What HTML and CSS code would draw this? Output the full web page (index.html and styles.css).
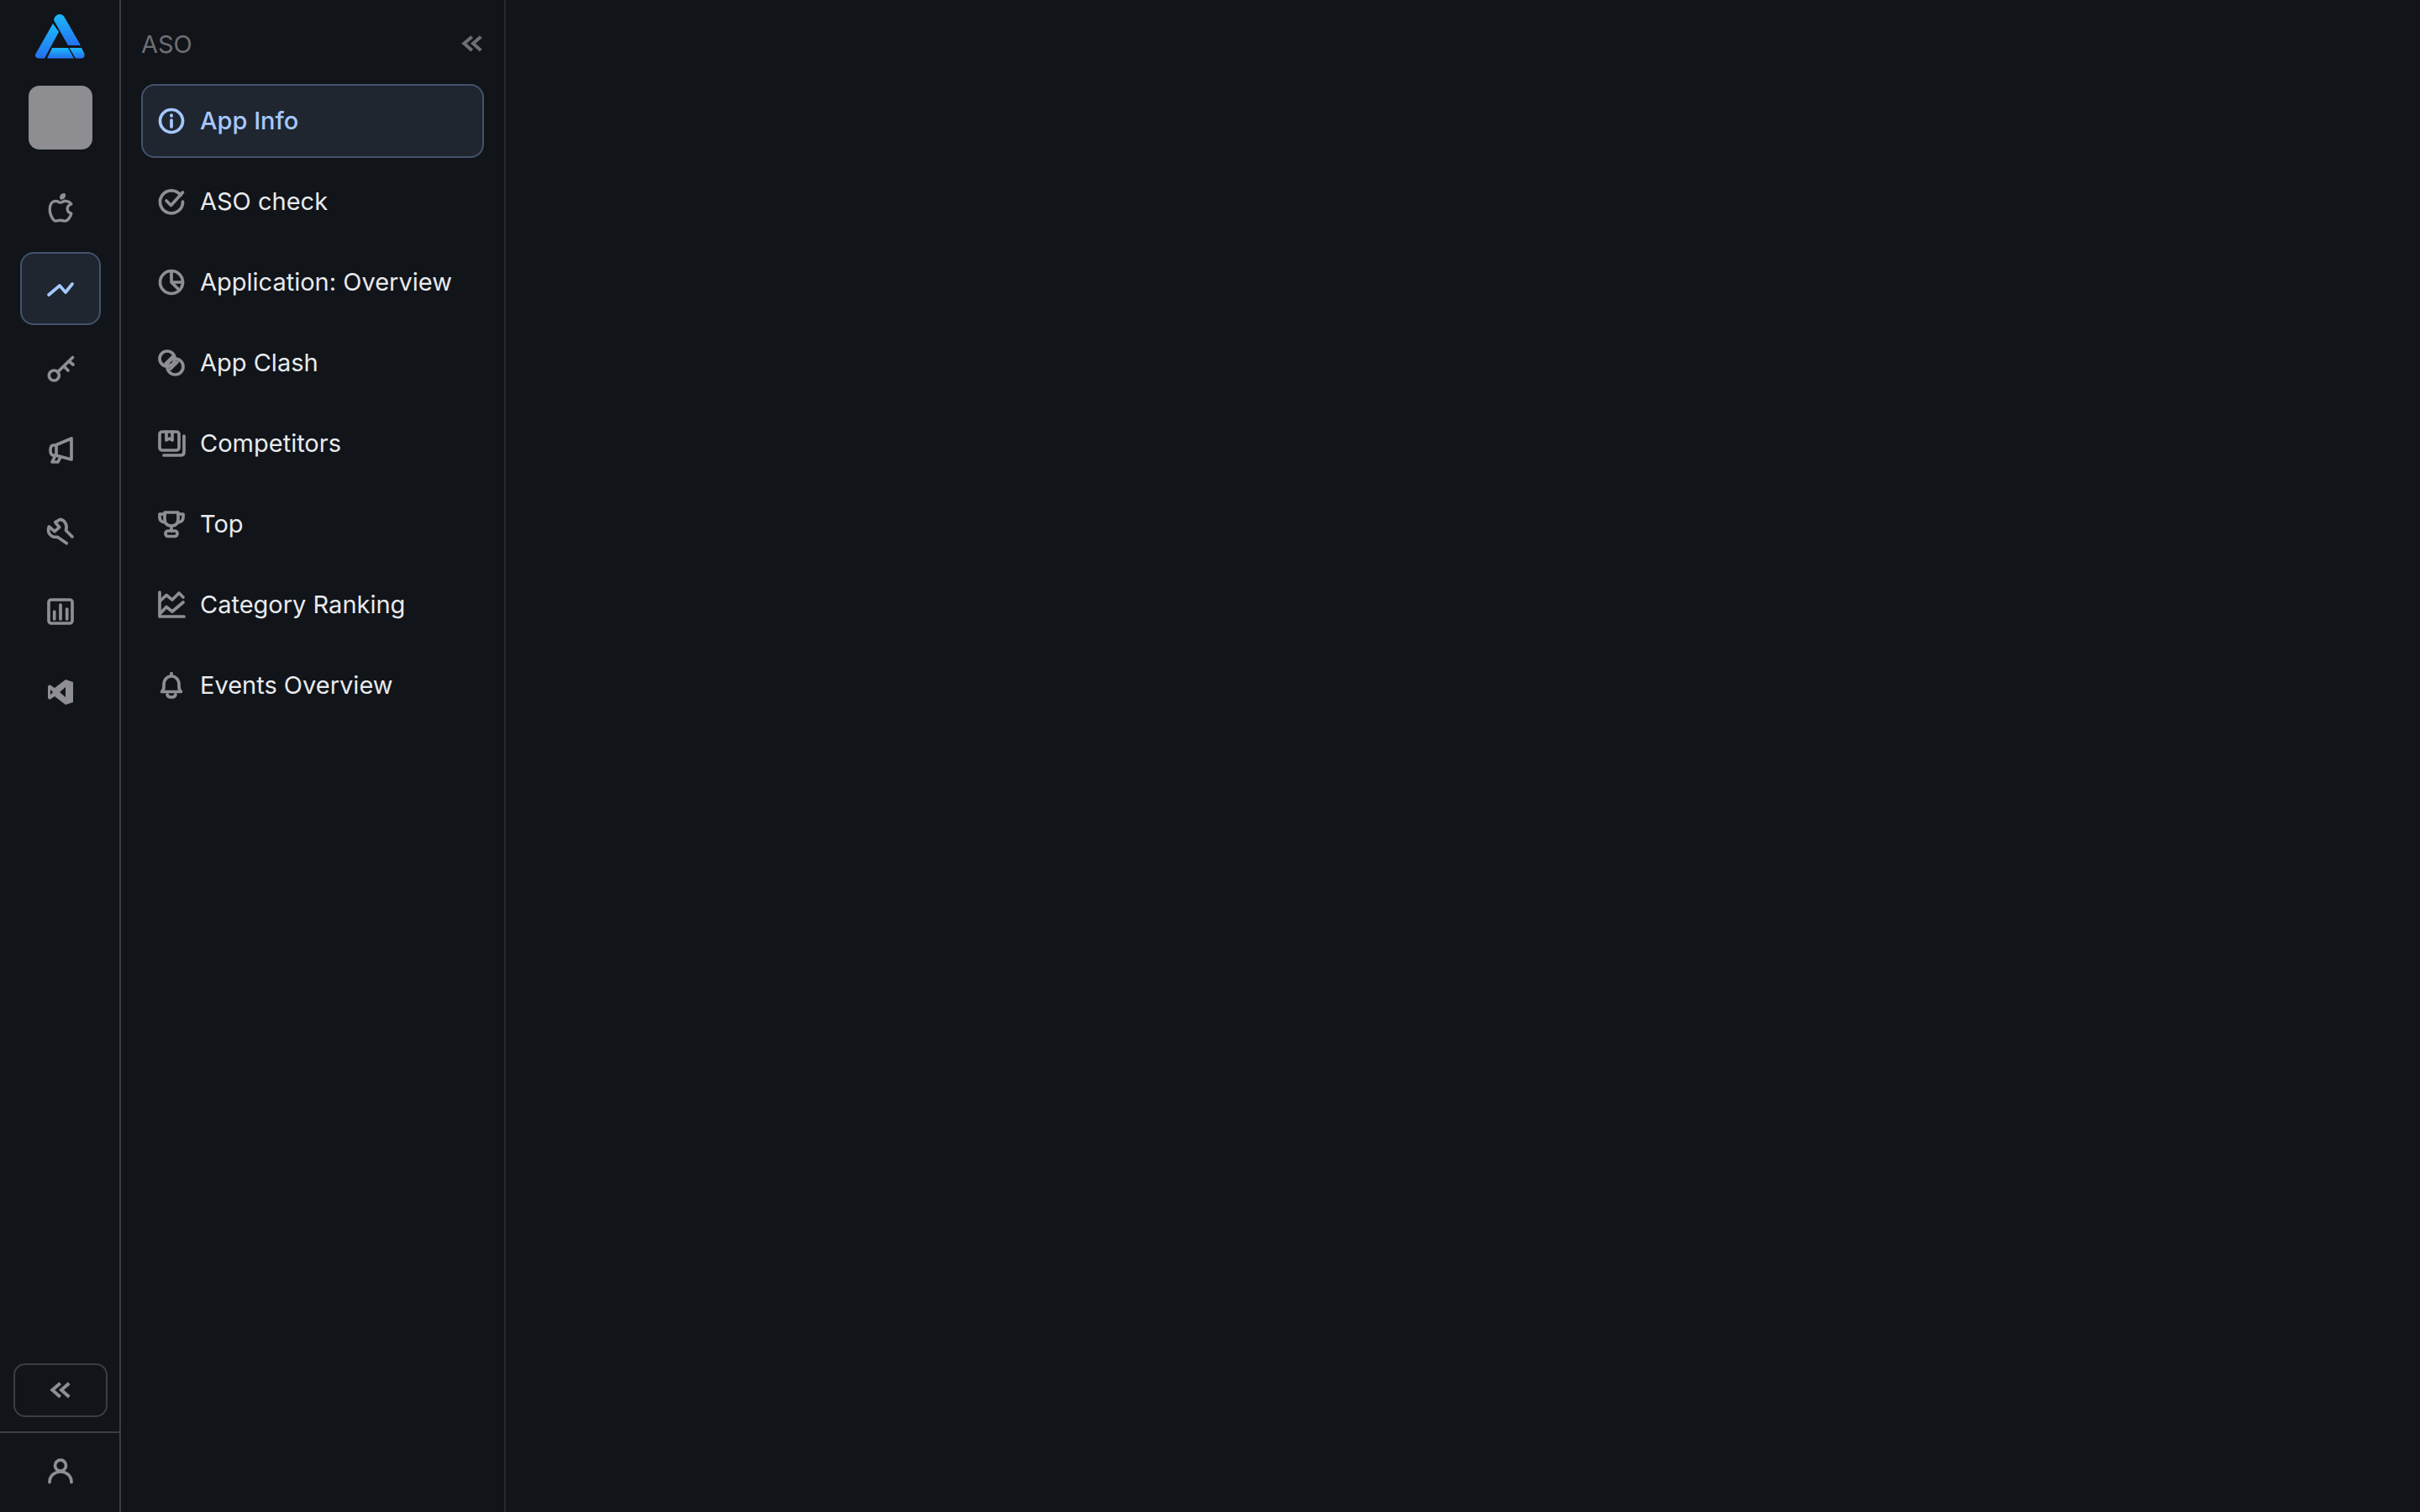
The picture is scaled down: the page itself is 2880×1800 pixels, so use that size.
FILE: index.html
```html
<!DOCTYPE html>
<html lang="en">
<head>
    <meta charset="UTF-8">
    <title>ASO - App Info</title>
    <link rel="stylesheet" href="styles.css">
</head>
<body>
    <aside class="rail">
        <svg class="logo" viewBox="43 17 60 54">
            <defs>
                <linearGradient id="logoGrad" x1="0" y1="0" x2="0" y2="1">
                    <stop offset="0" stop-color="#1cb9fb"/>
                    <stop offset="1" stop-color="#2470f0"/>
                </linearGradient>
            </defs>
            <g fill="url(#logoGrad)">
                <path d="M65 24 C66 19 69 17 72 17 C75 17 77 19 78 21 L97 54 H82 Z"/>
                <path d="M64 28 L71 38 L54 69.5 H47 C44 69.5 42 67 43.5 64 Z"/>
                <path d="M63 57 H82 L89 69.5 H57 Z"/>
                <path d="M83.500 57 H98 L101 63 C102.500 66 101 69.500 98 69.500 H91 Z"/>
            </g>
        </svg>
        <div class="app-thumb"></div>

        <nav class="rail-nav">
            <a class="rail-item">
                <svg class="ico ico-apple" viewBox="2.100 2.700 18.800 18.800"><path d="M8.286 7.008c-3.216 0 -4.286 3.23 -4.286 5.92c0 3.229 2.143 8.072 4.286 8.072c1.165 -.05 1.799 -.538 3.214 -.538c1.406 0 1.607 .538 3.214 .538s4.286 -3.229 4.286 -5.381c-.03 -.011 -2.649 -.434 -2.679 -3.23c-.02 -2.335 2.589 -3.179 2.679 -3.228c-1.096 -1.606 -3.162 -2.113 -3.75 -2.153c-1.535 -.12 -3.032 1.077 -3.75 1.077c-.729 0 -2.036 -1.077 -3.214 -1.077z"/><path d="M12 5a2 2 0 0 0 2 -2.500a2 2 0 0 0 -2 2.500"/></svg>
            </a>
            <a class="rail-item active">
                <svg class="ico" viewBox="0 0 32 32"><path d="M2 23 L15 12 L22 20 L30 10"/></svg>
            </a>
            <a class="rail-item">
                <svg class="ico" viewBox="0 0 32 32"><circle cx="8.300" cy="23" r="6"/><path d="M12.500 19 L30.500 1.500 M26 6 L31 10 M20 12 L25 17"/></svg>
            </a>
            <a class="rail-item">
                <svg class="ico" viewBox="0 0 32 32"><path d="M29 2 V27 L10 22 H7 C3 21 3 11 7 10 H10 Z"/><path d="M11 11 V22 M10 22 L6 30 H13 L16 24"/></svg>
            </a>
            <a class="rail-item">
                <svg class="ico" viewBox="0 0 32 32"><path d="M30 23 L22.500 15.500 C24.500 9 21 3 15.700 2.300 L9.700 5.700 L14.700 11.700 L9 16.700 L2.300 11 C0.500 16 2 20 5.700 22.300 C8 23.500 10 23.500 12.300 23.300 L23.300 30.700"/></svg>
            </a>
            <a class="rail-item">
                <svg class="ico" viewBox="0 0 32 32"><rect x="2" y="2" width="28" height="28" rx="3"/><path d="M8.700 16 V25 M16 8 V25 M23.700 13 V25"/></svg>
            </a>
            <a class="rail-item">
                <svg class="ico ico-solid" viewBox="0 0 32 32"><path fill-rule="evenodd" d="M22 1 L31 4 V28 L22 31 L9 21 L3 25 L1 23 V9 L3 7 L9 11 Z M22 10 L15 16 L22 22 Z M4 13 V19 L7 16 Z"/></svg>
            </a>
        </nav>

        <div class="rail-collapse">
            <button class="collapse-btn">
                <svg class="ico ico-chev" viewBox="0 0 32 32"><path d="M15.700 7.700 L6.300 15.700 L15.700 24 M26.300 7.700 L17 15.700 L26.300 24"/></svg>
            </button>
        </div>
        <div class="rail-user">
            <svg class="ico" viewBox="0 0 32 32"><circle cx="16" cy="9.700" r="6.500"/><path d="M3 29.500 C3 22 9 17 16 17 C23 17 29 22 29 29.500"/></svg>
        </div>
    </aside>

    <aside class="panel">
        <div class="panel-head">
            <span class="panel-title">ASO</span>
            <svg class="ico ico-chev ico-dim" viewBox="0 0 32 32"><path d="M15.700 7.700 L6.300 15.700 L15.700 24 M26.300 7.700 L17 15.700 L26.300 24"/></svg>
        </div>
        <nav class="panel-nav">
            <a class="panel-item active">
                <svg class="ico" viewBox="0 0 32 32"><circle cx="16" cy="16" r="13.500"/><path d="M16 15 V23 M16 9 V10"/></svg>
                <span>App Info</span>
            </a>
            <a class="panel-item">
                <svg class="ico" viewBox="0 0 32 32"><path d="M27 8.500 A13.500 13.500 0 1 0 29.500 16"/><path d="M10 15 L15.500 20.500 L29.500 5"/></svg>
                <span>ASO check</span>
            </a>
            <a class="panel-item">
                <svg class="ico" viewBox="0 0 32 32"><circle cx="16" cy="16" r="13.500"/><path d="M16 3 V16 H29.500 M16 16 L25.500 25.500"/></svg>
                <span>Application: Overview</span>
            </a>
            <a class="panel-item">
                <svg class="ico" viewBox="0 0 32 32"><circle cx="11" cy="11" r="9"/><circle cx="20.500" cy="20.500" r="9.500"/><path d="M9 17 L17 9 M15 23 L23 15"/></svg>
                <span>App Clash</span>
            </a>
            <a class="panel-item">
                <svg class="ico" viewBox="0 0 32 32"><rect x="2" y="2" width="23" height="22" rx="3"/><path d="M10 2 V12 L13.500 10 L17 12 V2"/><path d="M31 7 V26 Q31 30 27 30 H7"/></svg>
                <span>Competitors</span>
            </a>
            <a class="panel-item">
                <svg class="ico" viewBox="0 0 32 32"><path d="M8 2 H24 V10 Q24 18 16 18 Q8 18 8 10 Z"/><path d="M8 4 H2 V8 Q2 13 8 14 M24 4 H30 V8 Q30 13 24 14 M16 18 V24"/><rect x="9" y="24" width="14" height="6.500" rx="3"/></svg>
                <span>Top</span>
            </a>
            <a class="panel-item">
                <svg class="ico" viewBox="0 0 32 32"><path d="M2 1 V30 H31"/><path d="M2 12 L10 4.500 L17 10 L25 2 L30 7 M2 27 L10 18.500 L17 24 L30 13"/></svg>
                <span>Category Ranking</span>
            </a>
            <a class="panel-item">
                <svg class="ico" viewBox="0 0 32 32"><path d="M16 1.700 V5 M4.500 23.500 C6.500 22 7 20 7 17 V15 C7 9 11 5 16 5 C21 5 25 9 25 15 V17 C25 20 25.500 22 27.500 23.500 Z M11 27 C12 31 20 31 21 27"/></svg>
                <span>Events Overview</span>
            </a>
        </nav>
    </aside>

    <main class="content"></main>
</body>
</html>
```

FILE: styles.css
```css
* {
    margin: 0;
    padding: 0;
    box-sizing: border-box;
}

body {
    font-family: 'Inter', sans-serif;
    background: #111419;
    height: 100vh;
    display: flex;
    overflow: hidden;
    color: #e8eaed;
}

.ico {
    width: 32px;
    height: 32px;
    flex-shrink: 0;
    overflow: visible;
    fill: none;
    stroke: #8e8e93;
    stroke-width: 3.7;
    stroke-linecap: round;
    stroke-linejoin: round;
}

.ico-solid {
    fill: #8e8e93;
    stroke: none;
}

.ico-apple {
    stroke-width: 2;
}

.ico-chev {
    stroke-width: 4;
    stroke-linecap: butt;
    stroke-linejoin: miter;
}

.ico-dim {
    stroke: #6e6e73;
}

/* left rail */
.rail {
    width: 144px;
    border-right: 2px solid #3c3d42;
    display: flex;
    flex-direction: column;
    align-items: center;
    padding: 17px 0 0 2px;
}

.logo {
    width: 60px;
    height: 54px;
}

.app-thumb {
    width: 76px;
    height: 76px;
    margin-top: 31px;
    border-radius: 13px;
    background: #8e8d91;
}

.rail-nav {
    margin-top: 26px;
    display: flex;
    flex-direction: column;
    gap: 9px;
}

.rail-item {
    width: 96px;
    height: 87px;
    display: flex;
    align-items: center;
    justify-content: center;
    border: 2px solid transparent;
    border-radius: 16px;
}

.rail-item.active {
    background: #1f2630;
    border-color: #42536c;
}

.rail-item.active .ico {
    stroke: #a5c8ff;
}

.rail-collapse {
    margin-top: auto;
    padding-bottom: 17px;
}

.collapse-btn {
    width: 112px;
    height: 64px;
    display: flex;
    align-items: center;
    justify-content: center;
    background: none;
    border: 2px solid #3c3d42;
    border-radius: 14px;
}

.rail-user {
    width: calc(100% + 2px);
    height: 96px;
    margin-left: -2px;
    padding: 0 0 5px 2px;
    border-top: 2px solid #3c3d42;
    display: flex;
    align-items: center;
    justify-content: center;
}

/* second column */
.panel {
    width: 458px;
    border-right: 2px solid #24272d;
    padding: 4px 24px 0;
}

.panel-head {
    height: 96px;
    display: flex;
    align-items: center;
    justify-content: space-between;
}

.panel-head .ico {
    margin-right: -2px;
}

.panel-title {
    font-size: 29px;
    color: #6e6e73;
}

.panel-nav {
    display: flex;
    flex-direction: column;
    gap: 8px;
}

.panel-item {
    height: 88px;
    display: flex;
    align-items: center;
    gap: 18px;
    padding: 0 18px 1px;
    border: 2px solid transparent;
    border-radius: 16px;
    font-size: 29px;
}

.panel-item.active {
    background: #1f2630;
    border-color: #42536c;
    color: #a5c8ff;
    font-weight: 500;
}

.panel-item.active .ico {
    stroke: #a5c8ff;
}

.content {
    flex: 1;
}
```
